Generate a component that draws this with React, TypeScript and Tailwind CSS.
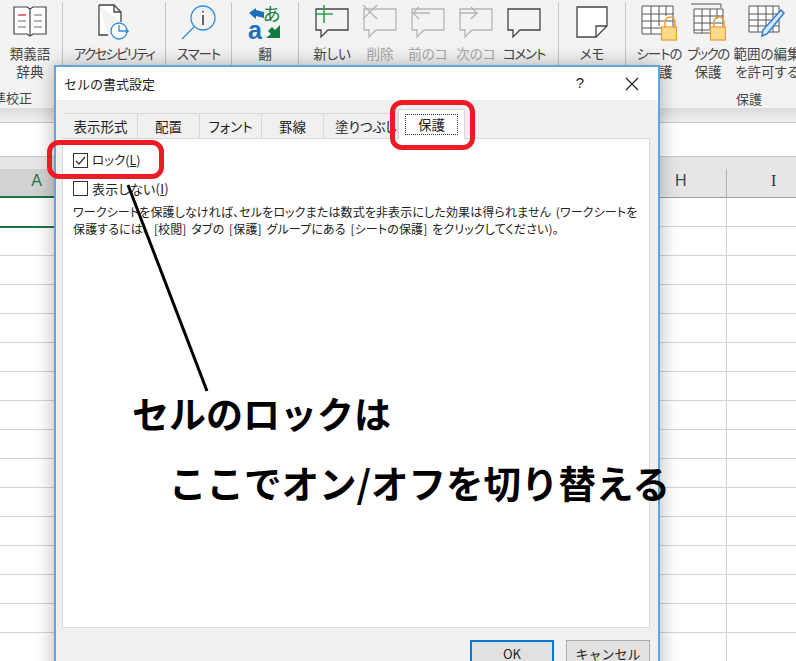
import React from "react";

const jp = "font-['Noto_Sans_CJK_JP','Noto_Sans',sans-serif]";

const Sep = () => <div className="w-px h-[92px] mt-[2px] bg-[#c6c6c6] shrink-0" />;

const BookIcon = () => (
  <svg width="36" height="32" viewBox="0 0 36 32" fill="none" stroke="#444" strokeWidth="1.2">
    <path d="M2 1h13l3 2 3-2h13v27H21l-3 2-3-2H2z" fill="#fff" />
    <path d="M18 3v27" />
    <path d="M6 9h8" stroke="#e81123" />
    <path d="M6 15h8M6 21h8M22 9h8M22 15h8M22 21h8" stroke="#666" />
  </svg>
);

const AccessIcon = () => (
  <svg width="34" height="36" viewBox="0 0 34 36" fill="none" strokeWidth="1.3">
    <path d="M2 1h15l7 7v10M17 1v7h7M2 1v30h9" stroke="#444" fill="#fff" />
    <circle cx="22" cy="27" r="8" stroke="#2b8fd8" fill="#fff" />
    <path d="M22 21v6h9l-2-2m2 2l-2 2" stroke="#2b8fd8" />
  </svg>
);

const SearchIcon = () => (
  <svg width="36" height="36" viewBox="0 0 36 36" fill="none" stroke="#2b8fd8" strokeWidth="1.3">
    <circle cx="22" cy="14" r="12" />
    <path d="M13 23L1 35" />
    <path d="M22 7v1.5M22 11v10" stroke="#444" strokeWidth="1.6" />
  </svg>
);

const TranslateIcon = () => (
  <svg width="34" height="36" viewBox="0 0 34 36">
    <path d="M1 9l7-5v2l8 2v6l-8-2v3z" fill="#1d6fb8" />
    <path d="M32 34H18l5-4-3-3 4-4 3 3 5-5z" fill="#107c41" />
    <text x="15" y="17" fontSize="18" fill="#107c41" fontFamily="Noto Sans CJK JP">あ</text>
    <text x="0" y="35" fontSize="25" fontWeight="700" fill="#1d6fb8" fontFamily="Liberation Sans">a</text>
  </svg>
);

const Bubble = ({ color, children }: { color: string; children?: React.ReactNode }) => (
  <svg width="36" height="36" viewBox="0 0 36 36" fill="none" stroke={color} strokeWidth="1.3">
    <path d="M2 5h32v21H14l-7 7v-7H2z" fill="#f3f3f3" />
    {children}
  </svg>
);

const MemoIcon = () => (
  <svg width="32" height="32" viewBox="0 0 32 32" fill="none" stroke="#444" strokeWidth="1.3">
    <path d="M1 1h30v19L20 31H1z" fill="#fff" />
    <path d="M31 20H20v11" />
  </svg>
);

const SheetLockIcon = ({ book }: { book?: boolean }) => (
  <svg width="36" height="38" viewBox="0 0 36 38" fill="none" stroke="#555" strokeWidth="1">
    {book && <path d="M1 1h30v4" />}
    <path d={book ? "M4 6h29v24H4z" : "M1 3h31v28H1z"} fill="#fff" />
    <path d={book ? "M4 13h29M4 20h29M4 27h22M12 6v24M20 6v20M27 6v10" : "M1 11h31M1 18h31M1 25h20M10 3v28M18 3v20M25 3v10"} />
    <path d="M24 24v-5a5 5 0 0 1 10 0v5" stroke="#ed9b33" strokeWidth="1.5" />
    <rect x="20.5" y="24" width="15" height="13" fill="#fbd98f" stroke="#ed9b33" strokeWidth="1.2" />
  </svg>
);

const EditIcon = () => (
  <svg width="38" height="36" viewBox="0 0 38 36" fill="none" stroke="#555" strokeWidth="1">
    <path d="M1 2h30v26H1z" fill="#fff" />
    <path d="M1 10h30M1 16h30M1 22h30M10 2v26M18 2v26M25 2v26" />
    <path d="M33 6l3 3-17 21-5 2 1-6z" fill="#d5e9f8" stroke="#2b7cd3" strokeWidth="1.5" />
  </svg>
);

type ItemProps = { w: string; icon: React.ReactNode; label: string; label2?: string; gray?: boolean; cls?: string };

const Item = ({ w, icon, label, label2, gray, cls }: ItemProps) => (
  <div className={`${w} shrink-0 flex flex-col items-center [font-feature-settings:'palt']`}>
    <div className="h-[38px] mt-[3px] flex items-center justify-center">{icon}</div>
    <div className={`text-[13.5px] leading-[18px] mt-[3px] whitespace-nowrap ${cls ?? ""} ${gray ? "text-[#a6a6a6]" : "text-[#444]"}`}>{label}</div>
    {label2 && <div className="text-[13.5px] leading-[18px] whitespace-nowrap text-[#444]">{label2}</div>}
  </div>
);

const Ribbon = () => (
  <div className="h-[108px] bg-[#f3f3f3] flex overflow-hidden relative z-10">
    <div className="w-[62px] shrink-0 relative">
      <Item w="w-[60px]" icon={<BookIcon />} label="類義語" label2="辞典" />
      <div className="text-[13px] leading-[18px] text-[#444] mt-[9px] ml-[-7px] whitespace-nowrap">準校正</div>
    </div>
    <Sep />
    <Item w="w-[102px]" icon={<AccessIcon />} label="アクセシビリティ" cls="tracking-[-1.8px]" />
    <Sep />
    <Item w="w-[65px]" icon={<SearchIcon />} label="スマート" cls="tracking-[-1px]" />
    <Sep />
    <Item w="w-[66px]" icon={<TranslateIcon />} label="翻" />
    <Sep />
    <div className="w-[259px] shrink-0 flex pl-[9px]">
      <Item w="w-[48px]" icon={<Bubble color="#444"><path d="M1 10h18M10 1v18" stroke="#2ea44f" strokeWidth="1.6" /></Bubble>} label="新しい" />
      <Item w="w-[48px]" gray icon={<Bubble color="#b5b5b5"><path d="M1 1l14 14M15 1L1 15" /></Bubble>} label="削除" />
      <Item w="w-[48px]" gray icon={<Bubble color="#b5b5b5"><path d="M20 9H3l6-6M3 9l6 6" /></Bubble>} label="前のコ" />
      <Item w="w-[48px]" gray icon={<Bubble color="#b5b5b5"><path d="M2 9h17l-6-6M19 9l-6 6" /></Bubble>} label="次のコ" />
      <Item w="w-[48px]" icon={<Bubble color="#444" />} label="コメント" cls="tracking-[-1.2px]" />
    </div>
    <Sep />
    <Item w="w-[66px]" icon={<MemoIcon />} label="メモ" />
    <Sep />
    <div className="flex-1 min-w-0">
      <div className="flex">
        <Item w="w-[66px]" icon={<SheetLockIcon />} label="シートの" label2="保護" cls="tracking-[-1px]" />
        <Item w="w-[32px]" icon={<SheetLockIcon book />} label="ブックの" label2="保護" cls="tracking-[-1.5px]" />
        <Item w="w-[86px]" icon={<EditIcon />} label="範囲の編集" label2="を許可する" />
      </div>
      <div className="text-[13px] leading-[18px] text-[#444] ml-[110px] mt-[10px]">保護</div>
    </div>
  </div>
);

const Sheet = () => {
  const rows = Array.from({ length: 16 });
  return (
    <div className="bg-white">
      <div className="h-[15px] bg-gradient-to-b from-[#dcdcdc] to-[#f0f0f0] border-b border-[#c8c8c8]" />
      <div className="h-[34px] bg-white border-b border-[#c8c8c8]" />
      <div className="h-[12px] bg-[#e6e6e6]" />
      <div className="h-[29px] flex bg-[#e6e6e6] border-b border-[#9f9f9f] text-[16px] leading-[24px] font-['Liberation_Sans',sans-serif] text-[#444]">
        <div className="w-[54px] h-[29px] bg-[#d2d2d2] border-b-2 border-[#217346] text-[#217346] text-right pr-[12px]">A</div>
        <div className="w-[620px]" />
        <div className="w-[53px] border-r border-[#b5b5b5] pl-[1px]">H</div>
        <div className="flex-1 pl-[44px] font-['Liberation_Serif',serif] text-[#333]">I</div>
      </div>
      {rows.map((_, i) => (
        <div key={i} className="h-[29px] flex border-b border-[#d4d4d4]">
          <div className={`w-[54px] ${i === 0 ? "border-b-2 border-[#217346] h-[30px]" : ""}`} />
          <div className="w-[673px] border-r border-[#d4d4d4]" />
        </div>
      ))}
    </div>
  );
};

const tabs = [
  { label: "表示形式", w: "w-[74px]", cls: "text-center" },
  { label: "配置", w: "w-[62px]", cls: "text-center" },
  { label: "フォント", w: "w-[62px]", cls: "text-center" },
  { label: "罫線", w: "w-[62px]", cls: "text-center" },
  { label: "塗りつぶし", w: "w-[74px]", cls: "pl-[11px]" },
];

const Check = ({ on }: { on?: boolean }) => (
  <div className="w-[15px] h-[15px] border border-[#333] bg-white flex items-center justify-center shrink-0">
    {on && (
      <svg width="13" height="13" viewBox="0 0 13 13" fill="none" stroke="#333" strokeWidth="1.3">
        <path d="M2 7l3 3 6-7" />
      </svg>
    )}
  </div>
);

const Dialog = () => (
  <div className="absolute left-[54px] top-[65px] w-[606px] h-[620px] border-2 border-[#5fa6dc] bg-[#f0f0f0] shadow-[0_0_18px_rgba(0,0,0,0.3)] z-20 flex flex-col">
    <div className="h-[33px] bg-white flex items-center pl-[8px] shrink-0">
      <span className="text-[13px] text-[#222] flex-1">セルの書式設定</span>
      <span className="text-[15px] text-[#222] w-[20px] text-center font-['Liberation_Sans',sans-serif]">?</span>
      <span className="w-[35px]" />
      <svg width="14" height="14" viewBox="0 0 14 14" stroke="#222" strokeWidth="1.2">
        <path d="M1 1l12 12M13 1L1 13" />
      </svg>
      <span className="w-[19px]" />
    </div>
    <div className="flex items-end h-[38px] pl-[8px] shrink-0 relative z-10 [font-feature-settings:'palt']">
      {tabs.map((t) => (
        <div key={t.label} className={`${t.w} ${t.cls} h-[25px] border-t border-r border-[#d9d9d9] bg-[#f0f0f0] text-[13.5px] leading-[24px] text-[#222] whitespace-nowrap overflow-hidden`}>
          {t.label}
        </div>
      ))}
      <div className="w-[67px] h-[30px] bg-white border-t border-x border-[#d9d9d9] mb-[-1px] px-[6px] pt-[4px]">
        <div className="h-[21px] border border-dotted border-[#333] text-[13.5px] leading-[19px] text-center text-[#222]">保護</div>
      </div>
    </div>
    <div className="mx-[6px] w-[588px] h-[490px] bg-white border border-[#d9d9d9] pl-[10px] pt-[14px] shrink-0">
      <div className="flex items-center gap-[4px] h-[15px]">
        <Check on />
        <span className="text-[12.5px] text-[#222] [font-feature-settings:'palt']">ロック(<span className="underline">L</span>)</span>
      </div>
      <div className="flex items-center gap-[4px] h-[15px] mt-[13px]">
        <Check />
        <span className="text-[13px] tracking-[0.3px] text-[#222] [font-feature-settings:'palt']">表示しない(<span className="underline">I</span>)</span>
      </div>
      <p className="text-[12px] leading-[17px] text-[#222] mt-[7px] w-[570px] tracking-[0.13px] [word-spacing:2px] [font-feature-settings:'palt'] whitespace-nowrap">
        ワークシートを保護しなければ、セルをロックまたは数式を非表示にした効果は得られません (ワークシートを<br />
        保護するには、 [校閲] タブの [保護] グループにある [シートの保護] をクリックしてください)。
      </p>
    </div>
    <div className="flex justify-end gap-[12px] pr-[8px] pt-[12px]">
      <div className="w-[84px] h-[30px] border-2 border-[#0078d7] bg-[#e1e1e1] text-[13px] leading-[24px] text-center text-[#222]">OK</div>
      <div className="w-[84px] h-[30px] border border-[#adadad] bg-[#e1e1e1] text-[13px] leading-[26px] text-center text-[#222]">キャンセル</div>
    </div>
  </div>
);

export default function App() {
  return (
    <div className={`relative w-[796px] h-[661px] overflow-hidden bg-white ${jp}`}>
      <Ribbon />
      <Sheet />
      <Dialog />
      {/* annotations drawn on top of the screenshot */}
      <div className="absolute left-[390px] top-[100px] w-[85px] h-[50px] border-[5px] border-[#ed1c24] rounded-[12px] z-30" />
      <div className="absolute left-[47px] top-[140px] w-[117px] h-[39px] border-[5px] border-[#ed1c24] rounded-[12px] z-30" />
      <svg className="absolute left-0 top-0 z-30" width="796" height="661" fill="none">
        <path d="M128 185L207 391" stroke="#000" strokeWidth="3" />
      </svg>
      <div className="absolute left-[132px] top-[386px] text-[37px] leading-[54px] font-bold text-black z-30 whitespace-nowrap">セルのロックは</div>
      <div className="absolute left-[169px] top-[455px] text-[37.5px] leading-[54px] font-bold text-black z-30 whitespace-nowrap">ここでオン/オフを切り替える</div>
    </div>
  );
}
